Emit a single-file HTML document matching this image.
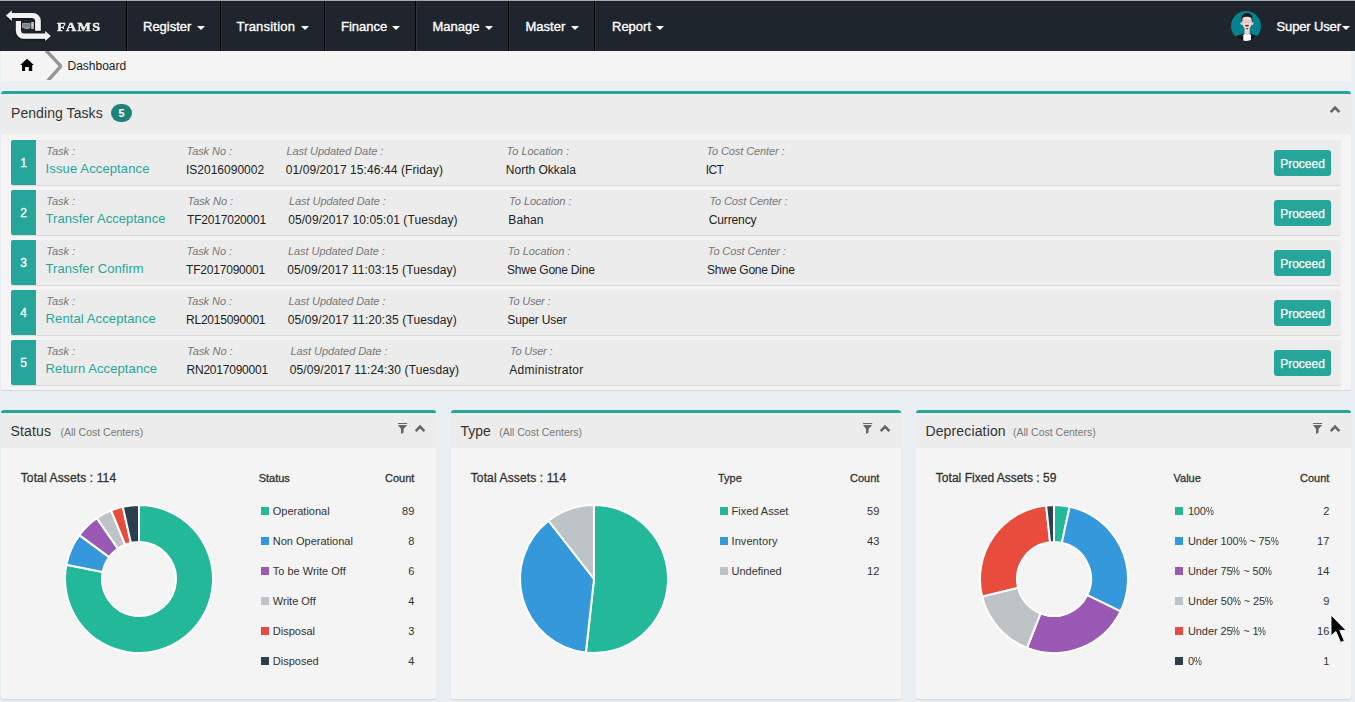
<!DOCTYPE html><html><head><meta charset="utf-8"><title>FAMS Dashboard</title><style>
*{box-sizing:border-box;margin:0;padding:0}
html,body{width:1355px;height:702px;overflow:hidden}
body{position:relative;background:#eaeff3;font-family:"Liberation Sans",sans-serif;font-size:12px;color:#222}
.abs,.abs *{position:absolute}
div,span,svg,i,b{position:absolute;white-space:nowrap}
.topline{left:0;top:0;width:1355px;height:1px;background:#a9a9ab}
.nav{left:0;top:1px;width:1355px;height:50px;background:#1f252d;border-top:1px solid #1a2027}
.sep{top:-1px;width:2px;height:50px;background:linear-gradient(90deg,#000 0,#000 50%,#2b333d 50%,#2b333d 100%)}
.sep2{top:0;width:1px;height:49px;background:#2a313a}
.nt{top:18px;height:14px;line-height:14px;font-size:13px;color:#fff;-webkit-text-stroke:0.35px #fff;text-shadow:0 1px 0 rgba(0,0,0,.4)}
.caret{width:0;height:0;border-left:4px solid transparent;border-right:4px solid transparent;border-top:4px solid #fff;top:24px}
.crumb{left:1px;top:51px;width:1350px;height:30px;background:#f4f4f4;overflow:hidden}
.panel{background:#f4f4f4;border-top:3px solid #26a69a;border-radius:3px 3px 2px 2px;box-shadow:0 1px 1px rgba(0,0,0,.1)}
.phead{left:0;top:0;right:0;background:#ececec}
.ptitle{font-size:14px;line-height:16px;color:#333}
.psmall{font-size:10.5px;line-height:14px;color:#777}
.row{left:10px;width:1330px;height:45px;background:#ececec;border-radius:2px;box-shadow:0 1px 1px rgba(0,0,0,.12)}
.num{left:0;top:0;width:25px;height:45px;background:#26a69a;border-radius:2px 0 0 2px;color:#fff;font-size:12px;line-height:47px;text-align:center;-webkit-text-stroke:0.3px #fff}
.lbl{top:5px;font-size:11px;line-height:13px;font-style:italic;color:#777}
.val{top:23px;font-size:12px;line-height:14px;color:#222}
.link{top:21px;font-size:13px;line-height:15px;color:#26a69a}
.btn{left:1263px;top:10px;width:57px;height:26px;padding-top:1px;background:#26a69a;border-radius:3px;color:#fff;font-size:12px;line-height:26px;text-align:center;-webkit-text-stroke:0.25px #fff}
.tot{font-size:12px;line-height:14px;color:#333;-webkit-text-stroke:0.3px #333}
.lh{font-size:11px;line-height:13px;color:#333;-webkit-text-stroke:0.3px #333}
.ll{font-size:11px;line-height:13px;color:#333}
.sq{width:8px;height:8px}
.r{text-align:right}
.pc{position:static;display:inline-block;transform:scaleX(.8);transform-origin:0 50%;margin-right:-1.96px}
</style></head><body>
<div class="topline"></div>
<div class="nav">
<svg style="left:0;top:-2px" width="126" height="52" viewBox="0 0 126 52">
<defs><filter id="ls" x="-20%" y="-20%" width="140%" height="140%"><feDropShadow dx="0" dy="1" stdDeviation="0.8" flood-color="#000" flood-opacity=".6"/></filter></defs>
<g filter="url(#ls)" fill="#f2f2f2">
<path d="M6 15.6L11.8 10.4V13H32.8A8 8 0 0 1 40.8 21V30.8H35.1V21A2.9 2.9 0 0 0 32.2 18.1H11.8V20.8Z"/>
<path d="M50.8 36.1L45.1 31V33.5H24A3 3 0 0 1 21 30.5V21H15.9V30.8A8 8 0 0 0 23.9 38.8H45.1V40.9Z"/>
</g>
<rect x="22" y="22.9" width="8.5" height="5.2" rx="0.8" fill="#96999c"/>
<rect x="23" y="23.9" width="6.5" height="3" fill="#7d8084"/>
<rect x="24.6" y="28" width="4.6" height="0.8" fill="#bdbdbd"/>
<rect x="31.3" y="22.1" width="2.4" height="6.9" rx="0.4" fill="#dcdcdc"/>
<rect x="31.9" y="23.2" width="1.2" height="0.7" fill="#999"/>
<circle cx="32.5" cy="27.2" r="0.6" fill="#888"/>
</svg>
<div style="left:56.6px;top:16.6px;font-family:'Liberation Serif',serif;font-weight:bold;font-size:12.5px;line-height:16px;letter-spacing:1.25px;transform:scaleX(1.125);transform-origin:0 0;color:#f0f0f0;-webkit-text-stroke:0.5px #f0f0f0;text-shadow:0 1px 1px rgba(0,0,0,.6)">FAMS</div>
<i class="sep" style="left:126px"></i>
<i class="sep" style="left:220px"></i>
<i class="sep" style="left:324px"></i>
<i class="sep" style="left:415px"></i>
<i class="sep" style="left:508px"></i>
<i class="sep" style="left:594px"></i>
<div class="nt" style="left:143px">Register</div><i class="caret" style="left:197px"></i>
<div class="nt" style="left:236.5px"><span style="position:static;letter-spacing:0.2px">Transition</span></div><i class="caret" style="left:301px"></i>
<div class="nt" style="left:341px">Finance</div><i class="caret" style="left:392px"></i>
<div class="nt" style="left:432.5px">Manage</div><i class="caret" style="left:485px"></i>
<div class="nt" style="left:525.5px">Master</div><i class="caret" style="left:571px"></i>
<div class="nt" style="left:612px">Report</div><i class="caret" style="left:656px"></i>
<svg style="left:1231px;top:9px" width="30" height="30" viewBox="0 0 30 30">
<defs><clipPath id="av"><circle cx="15" cy="15" r="15"/></clipPath></defs>
<g clip-path="url(#av)">
<rect width="30" height="30" fill="#00838f"/>
<path d="M3.6 30L4.6 25L12.4 22.8H19.8L26 25L27 30Z" fill="#15171a"/>
<path d="M12.3 30V24.200L13.500 22.600H18.700L19.900 24.200V30Z" fill="#fff"/>
<path d="M13.500 14H18.700V21.800L16.100 24.400L13.500 21.800Z" fill="#f2d2cb"/>
<path d="M11.100 7C11.100 4.600 13 3.800 16 3.800C19 3.800 20.900 4.600 20.900 7V12C20.900 14 19.800 15.600 18.700 16.800H13.500C12.200 15.600 11.100 14 11.100 12Z" fill="#f4d7d1"/>
<ellipse cx="10.500" cy="12.600" rx="1" ry="1.300" fill="#f1cfc8"/><ellipse cx="21.500" cy="12.600" rx="1" ry="1.300" fill="#f1cfc8"/>
<path d="M10.700 10.400C9.900 4.600 12.300 1.900 16 1.900C19.700 1.900 22.100 4.600 21.300 10.400L20.600 9.400C20.700 6.800 19.800 5.800 16 5.800C12.200 5.800 11.300 6.800 11.400 9.400Z" fill="#15161a"/>
<rect x="11.700" y="9.600" width="3.700" height="2" rx="0.900" fill="none" stroke="#b9aeab" stroke-width="0.550"/>
<rect x="16.600" y="9.600" width="3.700" height="2" rx="0.900" fill="none" stroke="#b9aeab" stroke-width="0.550"/>
<path d="M13.800 14.300Q16 13.400 18.200 14.300L17.700 14.900H14.300Z" fill="#2e2220"/>
<path d="M14.100 15.100Q16 14.500 17.900 15.100Q16 16.700 14.100 15.100Z" fill="#ea3d25"/>
<path d="M15 16.900H17L16 18.800Z" fill="#231d1d"/>
</g></svg>
<div class="nt" style="left:1276.6px;letter-spacing:-0.15px">Super User</div><i class="caret" style="left:1342px"></i>
</div>
<div class="crumb">
<svg style="left:0;top:0" width="40" height="30" viewBox="0 0 40 30"><path d="M26.05 7.7L32.8 13.9H31.2V20H27.8V16.1H24.1V20H21V13.9H19.200Z" fill="#000"/></svg>
<svg style="left:40px;top:0" width="30" height="29" viewBox="0 0 30 29"><path d="M5.1 -0.5L19.9 15.2L6.2 30.5" fill="none" stroke="#969696" stroke-width="3.4" stroke-linejoin="bevel"/></svg>
<div style="left:66.5px;top:8px;font-size:12px;line-height:14px;color:#222">Dashboard</div>
</div>
<div class="panel" style="left:1px;top:91px;width:1350px;height:299px">
<div class="phead" style="height:40px"></div>
<div class="ptitle" style="left:10px;top:11px;letter-spacing:0.07px">Pending Tasks</div>
<div style="left:110px;top:10px;width:21px;height:18px;border-radius:9px;background:#1f8279;color:#fff;font-weight:bold;font-size:11px;line-height:19px;text-align:center">5</div>
<svg style="left:1328px;top:11px" width="12" height="9" viewBox="0 0 12 9"><path d="M6.05 0.8L11.3 6.2L9.5 8L6.05 4.4L2.6 8L0.8 6.2Z" fill="#666"/></svg>
<div class="row" style="top:46px">
<div class="num">1</div>
<div class="lbl" style="left:35.2px">Task :</div><div class="link" style="left:34.6px;letter-spacing:0.13px">Issue Acceptance</div>
<div class="lbl" style="left:175.5px;letter-spacing:-0.075px">Task No :</div><div class="val" style="left:175px">IS2016090002</div>
<div class="lbl" style="left:275.5px;letter-spacing:-0.06px">Last Updated Date :</div><div class="val" style="left:274.7px;letter-spacing:0.09px">01/09/2017 15:46:44 (Friday)</div>
<div class="lbl" style="left:495.5px">To Location :</div><div class="val" style="left:494.8px">North Okkala</div>
<div class="lbl" style="left:695.5px;letter-spacing:-0.115px">To Cost Center :</div><div class="val" style="left:694.8px;letter-spacing:-0.7px">ICT</div>
<div class="btn">Proceed</div>
</div>
<div class="row" style="top:96px">
<div class="num">2</div>
<div class="lbl" style="left:35.2px">Task :</div><div class="link" style="left:34.6px;letter-spacing:0.06px">Transfer Acceptance</div>
<div class="lbl" style="left:176.5px;letter-spacing:-0.075px">Task No :</div><div class="val" style="left:176px;letter-spacing:-0.2px">TF2017020001</div>
<div class="lbl" style="left:278px;letter-spacing:-0.06px">Last Updated Date :</div><div class="val" style="left:277.2px;letter-spacing:0.085px">05/09/2017 10:05:01 (Tuesday)</div>
<div class="lbl" style="left:498.0px">To Location :</div><div class="val" style="left:497.3px;letter-spacing:0.09px">Bahan</div>
<div class="lbl" style="left:698.5px;letter-spacing:-0.115px">To Cost Center :</div><div class="val" style="left:697.8px;letter-spacing:-0.14px">Currency</div>
<div class="btn">Proceed</div>
</div>
<div class="row" style="top:146px">
<div class="num">3</div>
<div class="lbl" style="left:35.2px">Task :</div><div class="link" style="left:34.6px;letter-spacing:0.07px">Transfer Confirm</div>
<div class="lbl" style="left:175.5px;letter-spacing:-0.075px">Task No :</div><div class="val" style="left:175px;letter-spacing:-0.2px">TF2017090001</div>
<div class="lbl" style="left:277px;letter-spacing:-0.06px">Last Updated Date :</div><div class="val" style="left:276.2px;letter-spacing:0.117px">05/09/2017 11:03:15 (Tuesday)</div>
<div class="lbl" style="left:496.8px">To Location :</div><div class="val" style="left:496.1px;letter-spacing:-0.23px">Shwe Gone Dine</div>
<div class="lbl" style="left:696.8px;letter-spacing:-0.115px">To Cost Center :</div><div class="val" style="left:696.0999999999999px;letter-spacing:-0.23px">Shwe Gone Dine</div>
<div class="btn">Proceed</div>
</div>
<div class="row" style="top:196px">
<div class="num">4</div>
<div class="lbl" style="left:35.2px">Task :</div><div class="link" style="left:34.6px;letter-spacing:0.11px">Rental Acceptance</div>
<div class="lbl" style="left:175.5px;letter-spacing:-0.075px">Task No :</div><div class="val" style="left:175px;letter-spacing:-0.23px">RL2015090001</div>
<div class="lbl" style="left:277.5px;letter-spacing:-0.06px">Last Updated Date :</div><div class="val" style="left:276.7px;letter-spacing:0.103px">05/09/2017 11:20:35 (Tuesday)</div>
<div class="lbl" style="left:497.0px;letter-spacing:-0.22px">To User :</div><div class="val" style="left:496.3px;letter-spacing:-0.14px">Super User</div>
<div class="btn">Proceed</div>
</div>
<div class="row" style="top:246px">
<div class="num">5</div>
<div class="lbl" style="left:35.2px">Task :</div><div class="link" style="left:34.6px;letter-spacing:0.1px">Return Acceptance</div>
<div class="lbl" style="left:176.0px;letter-spacing:-0.075px">Task No :</div><div class="val" style="left:175.5px;letter-spacing:-0.22px">RN2017090001</div>
<div class="lbl" style="left:279.5px;letter-spacing:-0.06px">Last Updated Date :</div><div class="val" style="left:278.7px;letter-spacing:0.117px">05/09/2017 11:24:30 (Tuesday)</div>
<div class="lbl" style="left:499.0px;letter-spacing:-0.22px">To User :</div><div class="val" style="left:498.3px;letter-spacing:0.276px">Administrator</div>
<div class="btn">Proceed</div>
</div>
</div>
<div class="panel" style="left:1px;top:410px;width:435px;height:288.6px">
<div class="phead" style="height:35px"></div>
<div class="ptitle" style="left:9.4px;top:10px;letter-spacing:0.2px">Status</div>
<div class="psmall" style="left:59.5px;top:12px">(All Cost Centers)</div>
<svg style="left:397px;top:10px" width="10" height="12" viewBox="0 0 10 12"><path d="M0 0H9.2V1H0Z M0 2H9.2L5.6 6.1V9.4L3 11.1V6.1Z" fill="#666"/></svg>
<svg style="left:413px;top:11px" width="12" height="9" viewBox="0 0 12 9"><path d="M6.05 0.8L11.3 6.2L9.5 8L6.05 4.4L2.6 8L0.8 6.2Z" fill="#666"/></svg>
<div class="tot" style="left:19.7px;top:58px;letter-spacing:0.132px">Total Assets : 114</div>
<div class="lh" style="left:257.7px;top:59px">Status</div>
<div class="lh r" style="right:21.69999999999999px;top:59px">Count</div>
<svg style="left:58px;top:86px" width="160" height="160" viewBox="0 0 160 160">
<path d="M80.00 6.00A74 74 0 1 1 7.37 65.81L43.69 72.91A37 37 0 1 0 80.00 43.00Z" fill="#23b899" stroke="#fff" stroke-width="2" stroke-linejoin="round"/>
<path d="M7.37 65.81A74 74 0 0 1 20.37 36.17L50.19 58.09A37 37 0 0 0 43.69 72.91Z" fill="#3598db" stroke="#fff" stroke-width="2" stroke-linejoin="round"/>
<path d="M20.37 36.17A74 74 0 0 1 37.83 19.19L58.92 49.59A37 37 0 0 0 50.19 58.09Z" fill="#9b59b6" stroke="#fff" stroke-width="2" stroke-linejoin="round"/>
<path d="M37.83 19.19A74 74 0 0 1 52.15 11.44L66.08 45.72A37 37 0 0 0 58.92 49.59Z" fill="#bdc3c7" stroke="#fff" stroke-width="2" stroke-linejoin="round"/>
<path d="M52.15 11.44A74 74 0 0 1 63.82 7.79L71.91 43.90A37 37 0 0 0 66.08 45.72Z" fill="#e74c3c" stroke="#fff" stroke-width="2" stroke-linejoin="round"/>
<path d="M63.82 7.79A74 74 0 0 1 80.00 6.00L80.00 43.00A37 37 0 0 0 71.91 43.90Z" fill="#2c3e50" stroke="#fff" stroke-width="2" stroke-linejoin="round"/>
</svg>
<i class="sq" style="left:259.5px;top:94px;background:#23b899"></i>
<div class="ll" style="left:271.8px;top:92px">Operational</div>
<div class="ll r" style="right:21.69999999999999px;top:92px">89</div>
<i class="sq" style="left:259.5px;top:124px;background:#3598db"></i>
<div class="ll" style="left:271.8px;top:122px">Non Operational</div>
<div class="ll r" style="right:21.69999999999999px;top:122px">8</div>
<i class="sq" style="left:259.5px;top:154px;background:#9b59b6"></i>
<div class="ll" style="left:271.8px;top:152px">To be Write Off</div>
<div class="ll r" style="right:21.69999999999999px;top:152px">6</div>
<i class="sq" style="left:259.5px;top:184px;background:#bdc3c7"></i>
<div class="ll" style="left:271.8px;top:182px">Write Off</div>
<div class="ll r" style="right:21.69999999999999px;top:182px">4</div>
<i class="sq" style="left:259.5px;top:214px;background:#e74c3c"></i>
<div class="ll" style="left:271.8px;top:212px">Disposal</div>
<div class="ll r" style="right:21.69999999999999px;top:212px">3</div>
<i class="sq" style="left:259.5px;top:244px;background:#2c3e50"></i>
<div class="ll" style="left:271.8px;top:242px">Disposed</div>
<div class="ll r" style="right:21.69999999999999px;top:242px">4</div>
</div>
<div class="panel" style="left:451px;top:410px;width:450px;height:288.6px">
<div class="phead" style="height:35px"></div>
<div class="ptitle" style="left:9.4px;top:10px">Type</div>
<div class="psmall" style="left:48.19999999999999px;top:12px">(All Cost Centers)</div>
<svg style="left:412px;top:10px" width="10" height="12" viewBox="0 0 10 12"><path d="M0 0H9.2V1H0Z M0 2H9.2L5.6 6.1V9.4L3 11.1V6.1Z" fill="#666"/></svg>
<svg style="left:428px;top:11px" width="12" height="9" viewBox="0 0 12 9"><path d="M6.05 0.8L11.3 6.2L9.5 8L6.05 4.4L2.6 8L0.8 6.2Z" fill="#666"/></svg>
<div class="tot" style="left:19.69999999999999px;top:58px;letter-spacing:0.132px">Total Assets : 114</div>
<div class="lh" style="left:267px;top:59px">Type</div>
<div class="lh r" style="right:21.700000000000045px;top:59px">Count</div>
<svg style="left:63px;top:86px" width="160" height="160" viewBox="0 0 160 160">
<path d="M80 80L80.00 6.00A74 74 0 1 1 71.86 153.55Z" fill="#23b899" stroke="#fff" stroke-width="2" stroke-linejoin="round"/>
<path d="M80 80L71.86 153.55A74 74 0 0 1 34.55 21.60Z" fill="#3598db" stroke="#fff" stroke-width="2" stroke-linejoin="round"/>
<path d="M80 80L34.55 21.60A74 74 0 0 1 80.00 6.00Z" fill="#bdc3c7" stroke="#fff" stroke-width="2" stroke-linejoin="round"/>
</svg>
<i class="sq" style="left:268.5px;top:94px;background:#23b899"></i>
<div class="ll" style="left:280.5px;top:92px">Fixed Asset</div>
<div class="ll r" style="right:21.700000000000045px;top:92px">59</div>
<i class="sq" style="left:268.5px;top:124px;background:#3598db"></i>
<div class="ll" style="left:280.5px;top:122px;letter-spacing:0.08px">Inventory</div>
<div class="ll r" style="right:21.700000000000045px;top:122px">43</div>
<i class="sq" style="left:268.5px;top:154px;background:#bdc3c7"></i>
<div class="ll" style="left:280.5px;top:152px">Undefined</div>
<div class="ll r" style="right:21.700000000000045px;top:152px">12</div>
</div>
<div class="panel" style="left:916px;top:410px;width:435px;height:288.6px">
<div class="phead" style="height:35px"></div>
<div class="ptitle" style="left:9.4px;top:10px;letter-spacing:0.15px">Depreciation</div>
<div class="psmall" style="left:97px;top:12px">(All Cost Centers)</div>
<svg style="left:397px;top:10px" width="10" height="12" viewBox="0 0 10 12"><path d="M0 0H9.2V1H0Z M0 2H9.2L5.6 6.1V9.4L3 11.1V6.1Z" fill="#666"/></svg>
<svg style="left:413px;top:11px" width="12" height="9" viewBox="0 0 12 9"><path d="M6.05 0.8L11.3 6.2L9.5 8L6.05 4.4L2.6 8L0.8 6.2Z" fill="#666"/></svg>
<div class="tot" style="left:19.799999999999955px;top:58px;letter-spacing:0.025px">Total Fixed Assets : 59</div>
<div class="lh" style="left:257.5px;top:59px">Value</div>
<div class="lh r" style="right:21.700000000000045px;top:59px">Count</div>
<svg style="left:58px;top:86px" width="160" height="160" viewBox="0 0 160 160">
<path d="M80.00 6.00A74 74 0 0 1 95.64 7.67L87.82 43.84A37 37 0 0 0 80.00 43.00Z" fill="#23b899" stroke="#fff" stroke-width="2" stroke-linejoin="round"/>
<path d="M95.64 7.67A74 74 0 0 1 146.55 112.36L113.27 96.18A37 37 0 0 0 87.82 43.84Z" fill="#3598db" stroke="#fff" stroke-width="2" stroke-linejoin="round"/>
<path d="M146.55 112.36A74 74 0 0 1 53.05 148.92L66.53 114.46A37 37 0 0 0 113.27 96.18Z" fill="#9b59b6" stroke="#fff" stroke-width="2" stroke-linejoin="round"/>
<path d="M53.05 148.92A74 74 0 0 1 8.11 97.56L44.06 88.78A37 37 0 0 0 66.53 114.46Z" fill="#bdc3c7" stroke="#fff" stroke-width="2" stroke-linejoin="round"/>
<path d="M8.11 97.56A74 74 0 0 1 72.13 6.42L76.07 43.21A37 37 0 0 0 44.06 88.78Z" fill="#e74c3c" stroke="#fff" stroke-width="2" stroke-linejoin="round"/>
<path d="M72.13 6.42A74 74 0 0 1 80.00 6.00L80.00 43.00A37 37 0 0 0 76.07 43.21Z" fill="#2c3e50" stroke="#fff" stroke-width="2" stroke-linejoin="round"/>
</svg>
<i class="sq" style="left:259.4000000000001px;top:94px;background:#23b899"></i>
<div class="ll" style="left:272px;top:92px;letter-spacing:-0.25px">100<span class="pc">%</span></div>
<div class="ll r" style="right:21.700000000000045px;top:92px">2</div>
<i class="sq" style="left:259.4000000000001px;top:124px;background:#3598db"></i>
<div class="ll" style="left:272px;top:122px;letter-spacing:-0.09px">Under 100<span class="pc">%</span> ~ 75<span class="pc">%</span></div>
<div class="ll r" style="right:21.700000000000045px;top:122px">17</div>
<i class="sq" style="left:259.4000000000001px;top:154px;background:#9b59b6"></i>
<div class="ll" style="left:272px;top:152px;letter-spacing:-0.1px">Under 75<span class="pc">%</span> ~ 50<span class="pc">%</span></div>
<div class="ll r" style="right:21.700000000000045px;top:152px">14</div>
<i class="sq" style="left:259.4000000000001px;top:184px;background:#bdc3c7"></i>
<div class="ll" style="left:272px;top:182px;letter-spacing:-0.05px">Under 50<span class="pc">%</span> ~ 25<span class="pc">%</span></div>
<div class="ll r" style="right:21.700000000000045px;top:182px">9</div>
<i class="sq" style="left:259.4000000000001px;top:214px;background:#e74c3c"></i>
<div class="ll" style="left:272px;top:212px;letter-spacing:-0.1px">Under 25<span class="pc">%</span> ~ 1<span class="pc">%</span></div>
<div class="ll r" style="right:21.700000000000045px;top:212px">16</div>
<i class="sq" style="left:259.4000000000001px;top:244px;background:#2c3e50"></i>
<div class="ll" style="left:272px;top:242px;letter-spacing:-0.4px">0<span class="pc">%</span></div>
<div class="ll r" style="right:21.700000000000045px;top:242px">1</div>
</div>
<svg style="left:1328.9px;top:613.4px" width="20" height="33" viewBox="-2 -2 20 33"><path d="M0 0V20.9L4.9 16.5L9.6 27.4L13.4 25.9L8.8 15.4H15.1Z" fill="#000" stroke="#fff" stroke-width="0.9" stroke-linejoin="round"/></svg>
</body></html>
